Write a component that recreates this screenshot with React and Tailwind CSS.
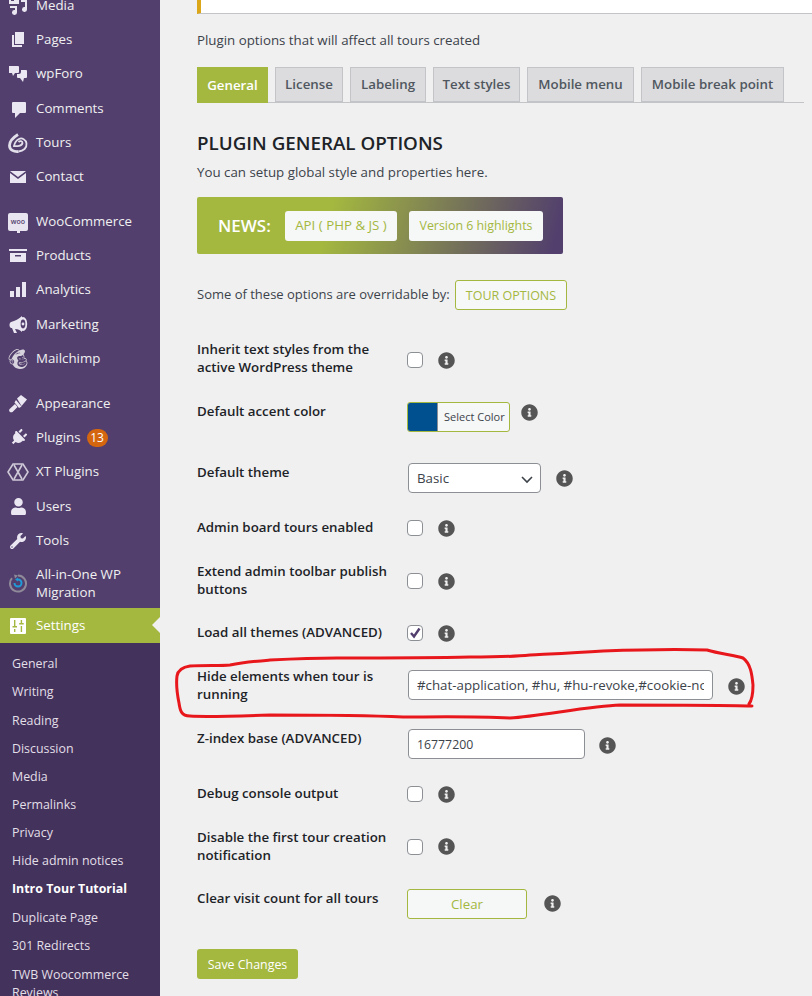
import React from "react";
import { FaInfoCircle, FaPlug, FaWrench, FaUser } from "react-icons/fa";
import { SiMailchimp } from "react-icons/si";

const C = "#ebe7f2";
const S = ({ children, vb = "0 0 20 20" }) => (
  <svg width="20" height="20" viewBox={vb} fill={C}>{children}</svg>
);
const icons = {
  media: <S><path d="M1 1h7v2h3v5H1zM3 3v2h3V3zM13 1h6v12.5a2.5 2.5 0 1 1-2-2.4V6h-4zM2 10h7v6.5a2.5 2.5 0 1 1-2-2.4V12H2z" /></S>,
  pages: <S><path d="M7 2h9v12H7zM4 5h2v10h8v2H4z" /></S>,
  forum: <S><path d="M1 2h9a1 1 0 0 1 1 1v5a1 1 0 0 1-1 1H7l-2 3-1-3H1zM13 6h5a1 1 0 0 1 1 1v6a1 1 0 0 1-1 1h-2l-1 4-3-4h-2a1 1 0 0 1-1-1v-3h2a2 2 0 0 0 2-2z" /></S>,
  comments: <S><path d="M5 3h12a1 1 0 0 1 1 1v9a1 1 0 0 1-1 1h-5l-5 5v-5H5a1 1 0 0 1-1-1V4a1 1 0 0 1 1-1z" /></S>,
  tours: (
    <svg width="22" height="22" viewBox="0 0 22 22" fill="none" stroke="#e2deea">
      <path strokeWidth="2.8" d="M11 2.5C7 5 2.5 9 2.5 13.5C2.5 18 7 20 11.5 19.5" />
      <path strokeWidth="1.8" d="M11.5 19.5C16.5 19 20 16 19.5 11.5C19 7.5 15 5.5 12 7C9 8.5 7.5 11.5 7 14C10 14.5 15 14 15.5 11C15.5 9 13 8.5 11.5 10" />
    </svg>
  ),
  contact: <S><path d="M2 4h16l-8 6zM2 6l8 6 8-6v10H2z" /></S>,
  woo: (
    <div className="relative w-[20px] h-[18px] rounded-[2px] bg-[#e8e4f0] flex items-center justify-center text-[7px] font-semibold leading-none text-[#523f6d]">
      woo
      <span className="absolute -bottom-[2px] left-[9px] w-[3px] h-[3px] bg-[#e8e4f0]" />
    </div>
  ),
  products: <S><path d="M1 3h18v2H1zM2 7h16v9H2zM7 9v1.5h6V9z" fillRule="evenodd" /></S>,
  analytics: <S><path d="M2 11h4v6H2zM8 7h4v10H8zM14 2h4v15h-4z" /></S>,
  marketing: (
    <svg width="20" height="20" viewBox="0 0 20 20">
      <path fill={C} d="M14 1c-3 3-7 5-11 6C1 8 1 12 3 13l1 0 2 5h3l-2-4c3 0 5 1 7 3z" />
      <ellipse cx="15" cy="9" rx="4.2" ry="7" fill={C} />
      <ellipse cx="15" cy="9" rx="2.4" ry="4.4" fill="#523f6d" />
      <circle cx="15" cy="9" r="1.4" fill={C} />
    </svg>
  ),
  mailchimp: <SiMailchimp size={20} color="#d8d4de" />,
  appearance: (
    <svg width="20" height="20" viewBox="0 0 20 20" fill={C}>
      <path d="M9 4.5L13 1l6 4.5-5.5 6.5z" />
      <path d="M8 6l5.5 6.5L11 14 6.5 8.5z" />
      <path d="M7 10l2.5 3-5 5c-1 .7-2.4.3-3-.6-.6-1-.4-2 .4-2.7z" />
    </svg>
  ),
  plugins: <FaPlug size={17} color={C} className="rotate-[45deg]" />,
  xt: (
    <svg width="22" height="20" viewBox="0 0 22 20" fill="none" stroke="#cfc9d8" strokeWidth="1.6">
      <path d="M6 2h10l5 8-5 8H6l-5-8zM7 3l8 14M15 3L7 17" />
    </svg>
  ),
  users: <FaUser size={17} color={C} />,
  tools: <FaWrench size={16} color={C} />,
  aio: (
    <svg width="20" height="20" viewBox="0 0 20 20" fill="none">
      <path d="M10 2.5a8 8 0 1 1-6 2.7" stroke="#8f8a99" strokeWidth="2" />
      <path d="M6 1.5l4 1-3 3z" fill="#8f8a99" />
      <path d="M6.5 10a3.5 3.5 0 1 0 3.5-3.5" stroke="#1f9bd8" strokeWidth="2" />
      <path d="M7 6.5l3-2v4z" fill="#1f9bd8" />
    </svg>
  ),
  settings: (
    <svg width="18" height="18" viewBox="0 0 18 18">
      <path fill="#fff" d="M2 1h14a1 1 0 0 1 1 1v14a1 1 0 0 1-1 1H2a1 1 0 0 1-1-1V2a1 1 0 0 1 1-1z" />
      <path fill="#a4b83f" d="M5 3h1.4v6H8v1.5H3.5V9H5zM5 12h1.4v3H5zM11.7 3h1.4v3h1.6v1.5h-4.5V6h1.5zM11.7 9h1.4v6h-1.4z" />
    </svg>
  ),
};

const menu = [
  ["media", "Media"], ["pages", "Pages"], ["forum", "wpForo"], ["comments", "Comments"], ["tours", "Tours"], ["contact", "Contact"],
  ["woo", "WooCommerce", true], ["products", "Products"], ["analytics", "Analytics"], ["marketing", "Marketing"], ["mailchimp", "Mailchimp"],
  ["appearance", "Appearance", true], ["plugins", "Plugins"], ["xt", "XT Plugins"], ["users", "Users"], ["tools", "Tools"],
];
const sub = ["General", "Writing", "Reading", "Discussion", "Media", "Permalinks", "Privacy", "Hide admin notices", "Intro Tour Tutorial", "Duplicate Page", "301 Redirects"];

function Item({ k, label, sep }) {
  return (
    <div className={`flex items-center h-[34.3px] ${sep ? "mt-[10.3px]" : ""}`}>
      <div className="w-[36px] flex justify-center pl-[1px] pr-[1px]">{icons[k]}</div>
      <span>{label}</span>
      {k === "plugins" && (
        <span className="ml-[6px] w-[21px] h-[18px] rounded-full bg-[#d4660f] text-[12px] text-white flex items-center justify-center">13</span>
      )}
    </div>
  );
}

function Info({ ml = 16, top = 0 }) {
  return <FaInfoCircle size={17} color="#555555" style={{ marginLeft: ml - 1, marginTop: top - 0.5 }} className="shrink-0" />;
}

function Check({ checked, top }) {
  return (
    <div style={{ marginTop: top }} className="w-[16px] h-[16px] shrink-0 rounded-[4px] border border-[#8c8f94] bg-white flex items-center justify-center">
      {checked && (
        <svg width="14" height="14" viewBox="0 0 14 14" fill="none" stroke="#523f6d" strokeWidth="2.4"><path d="M3 7l3 3.5L11.5 2.5" /></svg>
      )}
    </div>
  );
}

function Row({ h, label, children }) {
  return (
    <div style={{ height: h }} className="flex items-start">
      <div className="w-[210px] pr-[10px] shrink-0 font-[560] text-[#1d2327] leading-[18px]">{label}</div>
      {children}
    </div>
  );
}

const tabs = ["License", "Labeling", "Text styles", "Mobile menu", "Mobile break point"];
const tabW = [68, 76, 87, 107, 143];

export default function App() {
  return (
    <div className="relative flex w-[812px] h-[996px] overflow-hidden bg-[#f0f0f1] text-[13.3px] text-[#3c434a] font-['Open_Sans',sans-serif]">
      <aside className="w-[160px] shrink-0 bg-[#523f6d] text-[#f0f0f1] -mt-[11.4px]">
        {menu.map(([k, l, s]) => <Item key={l} k={k} label={l} sep={s} />)}
        <div className="flex items-center h-[50.5px]">
          <div className="w-[36px] flex justify-center">{icons.aio}</div>
          <span className="leading-[18px]">All-in-One WP<br />Migration</span>
        </div>
        <div className="relative flex items-center h-[35px] pt-[1px] bg-[#a4b83f] text-white">
          <div className="w-[36px] flex justify-center">{icons.settings}</div>
          <span>Settings</span>
          <div className="absolute right-0 top-[9px] w-0 h-0 border-y-[8px] border-y-transparent border-r-[8px] border-r-[#f0f0f1]" />
        </div>
        <div className="bg-[#43325b] pt-[7.1px] h-[400px] text-[12.4px] text-[#e2dfe8]">
          {sub.map((s) => (
            <div key={s + "x"} className={`h-[28.15px] pl-[12px] flex items-center ${s === "Intro Tour Tutorial" ? "font-bold text-white" : ""}`}>{s}</div>
          ))}
          <div className="pl-[12px] leading-[18px] pt-[5.5px]">TWB Woocommerce<br />Reviews</div>
        </div>
      </aside>

      <main className="flex-1 min-w-0 pl-[37px]">
        <div className="h-[14px] bg-white border-l-[4px] border-l-[#dba617] border-b border-b-[#c3c4c7]" />
        <p className="mt-[17px] leading-[18px]">Plugin options that will affect all tours created</p>

        <div className="mt-[18px] w-[607px] h-[36px] flex gap-[7px] border-b border-[#c3c4c7]">
          <div className="w-[71px] h-[36px] pt-[1px] bg-[#a4b83f] text-white font-semibold flex items-center justify-center">General</div>
          {tabs.map((t, i) => (
            <div key={t} style={{ width: tabW[i] }} className="h-[35px] pt-[1px] bg-[#dcdcde] border border-[#c3c4c7] font-semibold text-[#50575e] flex items-center justify-center">{t}</div>
          ))}
        </div>

        <h2 className="mt-[26px] h-[28px] leading-[28px] text-[18.8px] font-semibold text-[#1d2327]">PLUGIN GENERAL OPTIONS</h2>
        <p className="mt-[6px] leading-[18px]">You can setup global style and properties here.</p>

        <div className="mt-[16px] w-[366px] h-[57px] rounded-[2px] flex items-center pl-[21px] bg-[linear-gradient(105deg,#a4b83f_36%,#523f6d_97%)]">
          <span className="w-[67px] text-[17px] font-semibold text-white">NEWS:</span>
          <span className="w-[112px] h-[30px] rounded-[3px] bg-[#f6f7f7] text-[#a4b83f] flex items-center justify-center">API ( PHP &amp; JS )</span>
          <span className="ml-[12px] w-[134px] h-[30px] pt-[1px] rounded-[3px] bg-[#f6f7f7] text-[12.4px] text-[#a4b83f] flex items-center justify-center">Version 6 highlights</span>
        </div>

        <div className="mt-[26px] flex items-center h-[30px]">
          <span className="w-[258px] whitespace-nowrap text-[13px]">Some of these options are overridable by:</span>
          <span className="w-[112px] h-[30px] pt-[2px] rounded-[3px] border border-[#a4b83f] bg-[#f6f7f7] text-[12.5px] text-[#a4b83f] flex items-center justify-center">TOUR OPTIONS</span>
        </div>

        <div className="mt-[30px]">
          <Row h={62} label="Inherit text styles from the active WordPress theme">
            <Check top={12} /><Info top={12} />
          </Row>
          <Row h={61} label="Default accent color">
            <div className="w-[103px] h-[30px] rounded-[3px] border border-[#a4b83f] bg-[#f6f7f7] flex items-center text-[11px] overflow-hidden">
              <div className="w-[30px] h-full bg-[#004f8f] border-r border-[#8c8f94]" />
              <span className="pl-[6px]">Select Color</span>
            </div>
            <Info ml={12} top={2} />
          </Row>
          <Row h={55} label="Default theme">
            <div className="ml-[1px] w-[133px] h-[30px] pt-[1px] rounded-[4px] border border-[#8c8f94] bg-white flex items-center justify-between pl-[8px] pr-[7px]">
              <span>Basic</span>
              <svg width="12" height="12" viewBox="0 0 12 12" fill="none" stroke="#3c434a" strokeWidth="1.6"><path d="M1 4l5 5 5-5" /></svg>
            </div>
            <Info top={7} />
          </Row>
          <Row h={44} label="Admin board tours enabled">
            <Check top={2} /><Info top={2} />
          </Row>
          <Row h={61} label="Extend admin toolbar publish buttons">
            <Check top={11} /><Info top={11} />
          </Row>
          <Row h={44} label="Load all themes (ADVANCED)">
            <Check checked top={2} /><Info top={2} />
          </Row>
          <Row h={62} label="Hide elements when tour is running">
            <div className="ml-[1px] mt-[3px]">
              <input readOnly value="#chat-application, #hu, #hu-revoke,#cookie-notice" className="w-[305px] h-[30px] rounded-[4px] border border-[#8c8f94] bg-white px-[8px] outline-none" />
            </div>
            <Info top={11} />
          </Row>
          <Row h={55} label="Z-index base (ADVANCED)">
            <input readOnly value="16777200" className="ml-[1px] w-[177px] h-[30px] pt-[1px] rounded-[4px] border border-[#8c8f94] bg-white px-[8px] text-[12.3px] outline-none" />
            <Info ml={15} top={8} />
          </Row>
          <Row h={44} label="Debug console output">
            <Check top={2} /><Info top={2} />
          </Row>
          <Row h={61} label="Disable the first tour creation notification">
            <Check top={11} /><Info top={10} />
          </Row>
          <Row h={60} label="Clear visit count for all tours">
            <div className="w-[120px] h-[30px] pt-[1px] rounded-[3px] border border-[#a4b83f] bg-[#f6f7f7] text-[#a4b83f] flex items-center justify-center">Clear</div>
            <Info ml={18} top={6} />
          </Row>
        </div>
        <button className="w-[101px] h-[30px] pt-[2px] rounded-[3px] bg-[#a4b83f] text-[12.4px] text-white">Save Changes</button>
      </main>

      <svg className="absolute left-[170px] top-[640px] pointer-events-none" width="600" height="90" viewBox="170 640 600 90" fill="none">
        <path d="M752 706C720 705 660 705 620 705C590 706 540 716 510 718C470 716 430 717 403 717C360 715 310 715 270 715C240 716 205 717 190 716C181 716 180 710 179 703C177 693 176 684 177 676C178 670 183 667 190 666C205 665 220 666 230 665C245 662 258 661 270 660C290 659 315 658 337 658C380 658 430 658 470 657C490 657 510 657 530 655C550 654 575 653 603 651C630 650 680 649 707 650C720 654 735 655 743 658C751 664 752 675 753 685C753 692 752 700 749 704" stroke="#e8171c" strokeWidth="3" strokeLinecap="round" strokeLinejoin="round" />
      </svg>
    </div>
  );
}
